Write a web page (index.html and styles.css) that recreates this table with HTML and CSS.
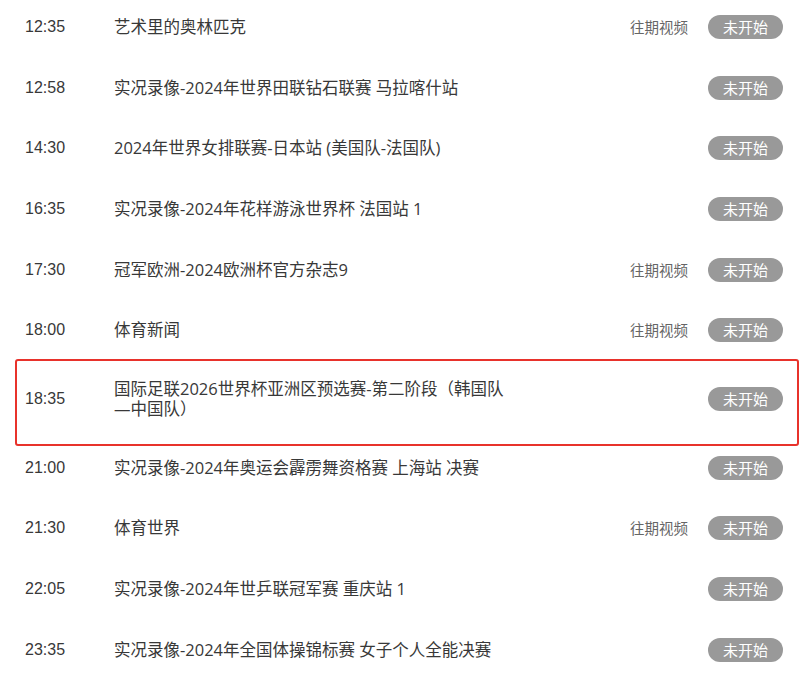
FILE: index.html
```html
<!DOCTYPE html>
<html lang="zh-CN">
<head>
<meta charset="utf-8">
<title>节目单</title>
<link rel="stylesheet" href="styles.css">
</head>
<body>
<ul class="schedule">
  <li class="row"><span class="time">12:35</span><span class="title">艺术里的奥林匹克</span><span class="meta"><a class="replay">往期视频</a><span class="badge">未开始</span></span></li>
  <li class="row"><span class="time">12:58</span><span class="title">实况录像-2024年世界田联钻石联赛 马拉喀什站</span><span class="meta"><span class="badge">未开始</span></span></li>
  <li class="row"><span class="time">14:30</span><span class="title">2024年世界女排联赛-日本站 (美国队-法国队)</span><span class="meta"><span class="badge">未开始</span></span></li>
  <li class="row"><span class="time">16:35</span><span class="title">实况录像-2024年花样游泳世界杯 法国站 1</span><span class="meta"><span class="badge">未开始</span></span></li>
  <li class="row"><span class="time">17:30</span><span class="title">冠军欧洲-2024欧洲杯官方杂志9</span><span class="meta"><a class="replay">往期视频</a><span class="badge">未开始</span></span></li>
  <li class="row"><span class="time">18:00</span><span class="title">体育新闻</span><span class="meta"><a class="replay">往期视频</a><span class="badge">未开始</span></span></li>
  <li class="row highlight"><span class="time">18:35</span><span class="title">国际足联2026世界杯亚洲区预选赛-第二阶段（韩国队—中国队）</span><span class="meta"><span class="badge">未开始</span></span></li>
  <li class="row"><span class="time">21:00</span><span class="title">实况录像-2024年奥运会霹雳舞资格赛 上海站 决赛</span><span class="meta"><span class="badge">未开始</span></span></li>
  <li class="row"><span class="time">21:30</span><span class="title">体育世界</span><span class="meta"><a class="replay">往期视频</a><span class="badge">未开始</span></span></li>
  <li class="row"><span class="time">22:05</span><span class="title">实况录像-2024年世乒联冠军赛 重庆站 1</span><span class="meta"><span class="badge">未开始</span></span></li>
  <li class="row"><span class="time">23:35</span><span class="title">实况录像-2024年全国体操锦标赛 女子个人全能决赛</span><span class="meta"><span class="badge">未开始</span></span></li>
</ul>
</body>
</html>
```

FILE: styles.css
```css
html, body {
  margin: 0;
  padding: 0;
  background: #fff;
}

body {
  font-family: "Open Sans", "Noto Sans CJK SC", sans-serif;
  color: #333;
  overflow: hidden;
}

.schedule {
  list-style: none;
  margin: -3.5px 0 0;
  padding: 0;
}

.row {
  position: relative;
  display: flex;
  align-items: center;
  padding: 18.35px 17px 18.35px 25px;
}

.time {
  flex: none;
  width: 89px;
  font-family: "Liberation Sans", Arial, sans-serif;
  font-size: 16px;
  line-height: 20px;
  color: #383838;
}

.title {
  flex: none;
  width: 400px;
  font-size: 16.5px;
  line-height: 20px;
  color: #383838;
}

.meta {
  margin-left: auto;
  display: flex;
  align-items: center;
  gap: 20px;
}

.replay {
  font-family: "Noto Sans CJK SC", sans-serif;
  font-size: 14.5px;
  line-height: 20px;
  color: #666;
  cursor: pointer;
}

.badge {
  display: inline-flex;
  align-items: center;
  justify-content: center;
  width: 75px;
  height: 24px;
  border-radius: 12px;
  background: #999;
  color: #fff;
  font-family: "Noto Sans CJK SC", sans-serif;
  font-size: 15px;
  line-height: 24px;
}

.highlight::after {
  content: "";
  position: absolute;
  left: 15px;
  right: 1px;
  top: -1.5px;
  bottom: -8.5px;
  border: 2px solid #e8322b;
  border-radius: 3px;
  pointer-events: none;
}
```
